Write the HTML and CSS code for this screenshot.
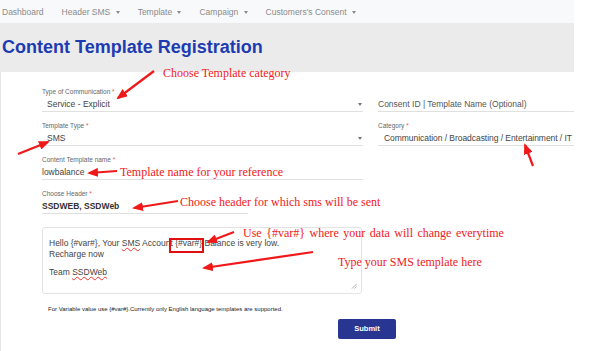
FILE: index.html
```html
<!DOCTYPE html>
<html lang="en">
<head>
  <meta charset="UTF-8" />
  <meta name="viewport" content="width=device-width, initial-scale=1.0"/>
  <title>Content Template Registration</title>
  <link rel="stylesheet" href="styles.css">
</head>
<body>
  <div class="shell">
    <nav class="topbar">
      <span class="nav-item">Dashboard</span>
      <span class="nav-item">Header SMS <i class="caret"></i></span>
      <span class="nav-item">Template <i class="caret"></i></span>
      <span class="nav-item">Campaign <i class="caret"></i></span>
      <span class="nav-item">Customers's Consent <i class="caret"></i></span>
    </nav>

    <div class="page-head">
      <h1>Content Template Registration</h1>
    </div>

    <div class="card">
      <div class="form-grid">
        <div class="field">
          <div class="field-label">Type of Communication <span class="req">*</span></div>
          <div class="field-value select">Service - Explicit <i class="sel-caret"></i></div>
        </div>
        <div class="field">
          <div class="field-label"></div>
          <div class="field-value placeholder">Consent ID | Template Name (Optional)</div>
        </div>

        <div class="field">
          <div class="field-label">Template Type <span class="req">*</span></div>
          <div class="field-value select">SMS <i class="sel-caret"></i></div>
        </div>
        <div class="field">
          <div class="field-label">Category <span class="req">*</span></div>
          <div class="field-value select wide">Communication / Broadcasting / Entertainment / IT</div>
        </div>

        <div class="field">
          <div class="field-label">Content Template name <span class="req">*</span></div>
          <div class="field-value plain">lowbalance</div>
        </div>
        <div></div>

        <div class="field short">
          <div class="field-label">Choose Header <span class="req">*</span></div>
          <div class="field-value plain strong">SSDWEB, SSDWeb</div>
        </div>
      </div>

      <div class="sms-box">
        <div>Hello {#var#}, Your <span class="typo">SMS</span> Account {#var#} Balance is very low.</div>
        <div>Recharge now</div>
        <div class="sign">Team <span class="typo">SSDWeb</span></div>
        <svg class="grip" width="6" height="6" viewBox="0 0 6 6">
          <path d="M5.5 1 L1 5.5 M5.5 3.5 L3.5 5.5" stroke="#999" stroke-width="0.8"/>
        </svg>
      </div>

      <p class="note">For Variable value use {#var#}.Currently only English language templates are supported.</p>

      <div class="actions">
        <button class="btn-submit">Submit</button>
      </div>
    </div>
  </div>

  <div class="notes">
    <svg class="arrows" width="602" height="351" viewBox="0 0 602 351">
      <defs>
        <marker id="head" markerUnits="userSpaceOnUse" markerWidth="11" markerHeight="9" refX="9" refY="4.5" orient="auto">
          <path d="M0 0 L11 4.5 L0 9 z" fill="#f01818"/>
        </marker>
      </defs>
      <g stroke="#f01818" stroke-width="2.2" marker-end="url(#head)">
        <line x1="154" y1="71" x2="118" y2="98"/>
        <line x1="18" y1="154" x2="48" y2="142"/>
        <line x1="533" y1="166" x2="525" y2="145"/>
        <line x1="117" y1="171" x2="89" y2="173"/>
        <line x1="178" y1="201" x2="134" y2="208"/>
        <line x1="234" y1="232" x2="208" y2="242"/>
        <line x1="313" y1="252" x2="204" y2="268"/>
      </g>
    </svg>
    <span class="note-text n1">Choose Template category</span>
    <span class="note-text n2">Template name for your reference</span>
    <span class="note-text n3">Choose header for which sms will be sent</span>
    <span class="note-text n4">Use {#var#} where your data will change everytime</span>
    <span class="note-text n5">Type your SMS template here</span>
    <span class="var-box"></span>
  </div>
</body>
</html>
```

FILE: styles.css
```css
body {
  margin: 0;
  position: relative;
  width: 602px;
  height: 351px;
  overflow: hidden;
  background: #fff;
  font-family: 'Liberation Sans', Arial, sans-serif;
  color: #444;
}

.shell {
  width: 574px;
  height: 351px;
  overflow: hidden;
}

/* barra superior */
.topbar {
  height: 23px;
  background: #f8f9fa;
  display: flex;
  align-items: center;
  gap: 18px;
  padding-left: 2px;
  font-size: 8.5px;
  color: #8b8b8b;
}

.nav-item {
  white-space: nowrap;
}

.caret {
  display: inline-block;
  width: 0;
  height: 0;
  margin-left: 3px;
  vertical-align: middle;
  border-left: 2.5px solid transparent;
  border-right: 2.5px solid transparent;
  border-top: 3px solid #8b8b8b;
}

.page-head {
  height: 49px;
  background: #ebebeb;
  display: flex;
  align-items: center;
}

.page-head h1 {
  margin: 0;
  padding-left: 2px;
  font-size: 18px;
  font-weight: bold;
  color: #1d3bb2;
}

.card {
  background: #fff;
  border-left: 1px solid #e4e4e4;
  height: 279px;
  padding: 16px 0 0 41px;
  box-sizing: border-box;
}

.form-grid {
  display: grid;
  grid-template-columns: 321px 196px;
  column-gap: 15px;
}

.field {
  margin-bottom: 10px;
}

.field.short {
  width: 206px;
}

.field-label {
  height: 8px;
  font-size: 6.5px;
  line-height: 8px;
  color: #666;
  white-space: nowrap;
}

.req {
  color: #e55;
}

.field-value {
  margin-top: 2px;
  padding-bottom: 1px;
  height: 12px;
  font-size: 8.5px;
  line-height: 12px;
  color: #444;
  border-bottom: 1px solid #e0e0e0;
  white-space: nowrap;
  display: flex;
  align-items: center;
  justify-content: space-between;
}

.field-value.select {
  padding-left: 5px;
  padding-right: 1px;
}

.field-value.wide {
  padding-left: 6px;
  letter-spacing: -0.05px;
}

.field-value.placeholder {
  color: #555;
}

.field-value.strong {
  font-weight: bold;
  color: #333;
}

.sel-caret {
  width: 0;
  height: 0;
  border-left: 2.5px solid transparent;
  border-right: 2.5px solid transparent;
  border-top: 3px solid #777;
}

/* caja del mensaje */
.sms-box {
  position: relative;
  width: 320px;
  height: 67px;
  margin-top: 3px;
  padding: 10px 6px;
  box-sizing: border-box;
  border: 1px solid #e3e3e3;
  border-radius: 3px;
  font-size: 8.5px;
  line-height: 11px;
  color: #444;
}

.sms-box .sign {
  margin-top: 7px;
}

.typo {
  text-decoration: underline wavy #e33;
  text-decoration-thickness: 0.6px;
}

.grip {
  position: absolute;
  right: 4px;
  bottom: 4px;
}

.note {
  margin: 11px 0 0 6px;
  font-size: 6px;
  line-height: 8px;
  color: #222;
}

.actions {
  margin-top: 4px;
  padding-left: 296px;
}

.btn-submit {
  width: 58px;
  height: 20px;
  padding: 0;
  border: none;
  border-radius: 2px;
  background: #283591;
  color: #fff;
  font-family: 'Liberation Sans', Arial, sans-serif;
  font-size: 7.5px;
  font-weight: bold;
}

/* anotaciones en rojo */
.notes {
  position: absolute;
  top: 0;
  left: 0;
  width: 602px;
  height: 351px;
  pointer-events: none;
}

.arrows {
  position: absolute;
  top: 0;
  left: 0;
}

.note-text {
  position: absolute;
  font-family: 'Liberation Serif', 'Times New Roman', serif;
  font-size: 12px;
  line-height: 14px;
  color: #f02020;
  white-space: nowrap;
}

.n1 { left: 163px; top: 66px; }
.n2 { left: 120px; top: 165px; }
.n3 { left: 180px; top: 195px; }
.n4 { left: 243px; top: 228px; line-height: 10px; word-spacing: 1.5px; }
.n5 { left: 338px; top: 255px; }

.var-box {
  position: absolute;
  left: 169px;
  top: 238px;
  width: 35px;
  height: 15px;
  box-sizing: border-box;
  border: 2px solid #e01010;
}
```
